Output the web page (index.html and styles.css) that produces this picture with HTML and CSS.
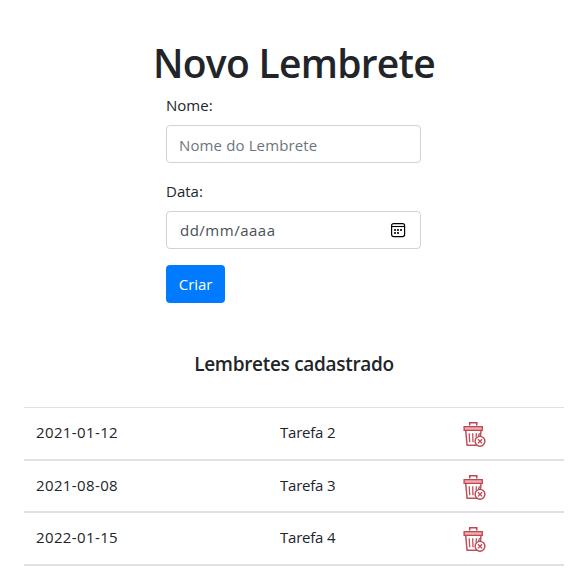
FILE: index.html
```html
<!DOCTYPE html>
<html lang="pt-BR">
<head>
<meta charset="utf-8">
<title>Novo Lembrete</title>
<link rel="stylesheet" href="styles.css">
</head>
<body>
<svg class="sprite" aria-hidden="true">
  <symbol id="trash" viewBox="0 0 24 26">
    <path d="M6.7 4.5V1.7h7.1v2.8" fill="none" stroke="#b94852" stroke-width="1.5"/>
    <path d="M2.7 9.5 4.1 24.2h10.5M18 9.5l-.5 6" fill="none" stroke="#bd505b" stroke-width="1.5"/>
    <path d="M1.1 5.7h18.2v3.6H1.1z" fill="#f2aaae" stroke="#bb4853" stroke-width="1.3"/>
    <path d="M6.2 12.2l.5 9M9.7 12.2l.3 9M13.4 12.2l-.3 4M16.5 12.2l-1 3" fill="none" stroke="#bd505b" stroke-width="1.3"/>
    <circle cx="17" cy="20.3" r="4.9" fill="#fff" stroke="#b94852" stroke-width="1.4"/>
    <path d="M14.9 18.2l4.2 4.2m0-4.2-4.2 4.2" stroke="#b94852" stroke-width="1.3"/>
  </symbol>
</svg>
<main class="container">
  <h1 class="title">Novo Lembrete</h1>
  <form class="form">
    <label class="label label-name" for="nome">Nome:</label>
    <input class="control" id="nome" type="text" placeholder="Nome do Lembrete">
    <label class="label label-date">Data:</label>
    <div class="control date">
      <span>dd/mm/aaaa</span>
      <svg class="calendar" viewBox="0 0 16 16"><rect x="1.6" y="1.6" width="13" height="13" rx="2" fill="none" stroke="#000" stroke-width="1.2"/><path d="M1.5 4.5h13" stroke="#000" stroke-width="1.1"/><path d="M7 7h2v2H7zM10 7h2v2h-2zM4 7h2v2H4zM4 10h2v2H4zM7 10h2v2H7z" fill="#333"/></svg>
    </div>
    <button class="button" type="button">Criar</button>
  </form>
  <h2 class="subtitle">Lembretes cadastrado</h2>
  <div class="list">
    <div class="row"><span class="day">2021-01-12</span><span class="task">Tarefa 2</span><svg class="trash"><use href="#trash"/></svg></div>
    <div class="row row-short"><span class="day">2021-08-08</span><span class="task">Tarefa 3</span><svg class="trash"><use href="#trash"/></svg></div>
    <div class="row"><span class="day">2022-01-15</span><span class="task">Tarefa 4</span><svg class="trash"><use href="#trash"/></svg></div>
  </div>
</main>
</body>
</html>
```
FILE: styles.css
```css
* { box-sizing: border-box; }
body {
  margin: 0;
  background: #fff;
  color: #212529;
  font: 15px/24px "Open Sans", "Noto Sans", sans-serif;
}
.sprite { display: none; }
.container { width: 540px; margin-left: 24px; padding-top: 39px; }
.title {
  margin: 0;
  height: 48px;
  font-size: 39px;
  line-height: 48px;
  font-weight: 600;
  letter-spacing: -0.72px;
  text-align: center;
}
.form {
  display: flex;
  flex-direction: column;
  align-items: flex-start;
  width: 255px;
  margin-left: 142px;
  padding-top: 6px;
}
.label { display: block; height: 24px; }
.label-name { margin-bottom: 8px; }
.label-date { margin: 16px 0 8px; }
.control {
  width: 255px;
  height: 38px;
  padding: 2px 12px 0;
  border: 1px solid #ced4da;
  border-radius: 4px;
  background: #fff;
  color: #495057;
  font: inherit;
  letter-spacing: 0.13px;
}
.control::placeholder { color: #6c757d; opacity: 1; }
.date {
  display: flex;
  align-items: center;
  justify-content: space-between;
  padding: 0 14px 0 13px;
  letter-spacing: 0.5px;
}
.calendar { width: 16px; height: 16px; }
.button {
  height: 38px;
  width: 59px;
  margin-top: 16px;
  padding: 0;
  border: 0;
  border-radius: 4px;
  background: #007bff;
  color: #fff;
  font: inherit;
  letter-spacing: -0.1px;
}
.subtitle {
  margin: 49px 0 31px;
  font-size: 19px;
  line-height: 24px;
  font-weight: 600;
  letter-spacing: -0.3px;
  text-align: center;
}
.list { border-top: 1px solid #dee2e6; }
.row {
  display: grid;
  grid-template-columns: 244px 183px 1fr;
  height: 53px;
  padding: 13px 0 0 12px;
  border-bottom: 2px solid #dee2e6;
}
.row-short { height: 52px; }
.day, .task { margin-top: -1px; }
.day { letter-spacing: 0.38px; }
.task { letter-spacing: -0.22px; }
.trash { width: 24px; height: 26px; }
```
